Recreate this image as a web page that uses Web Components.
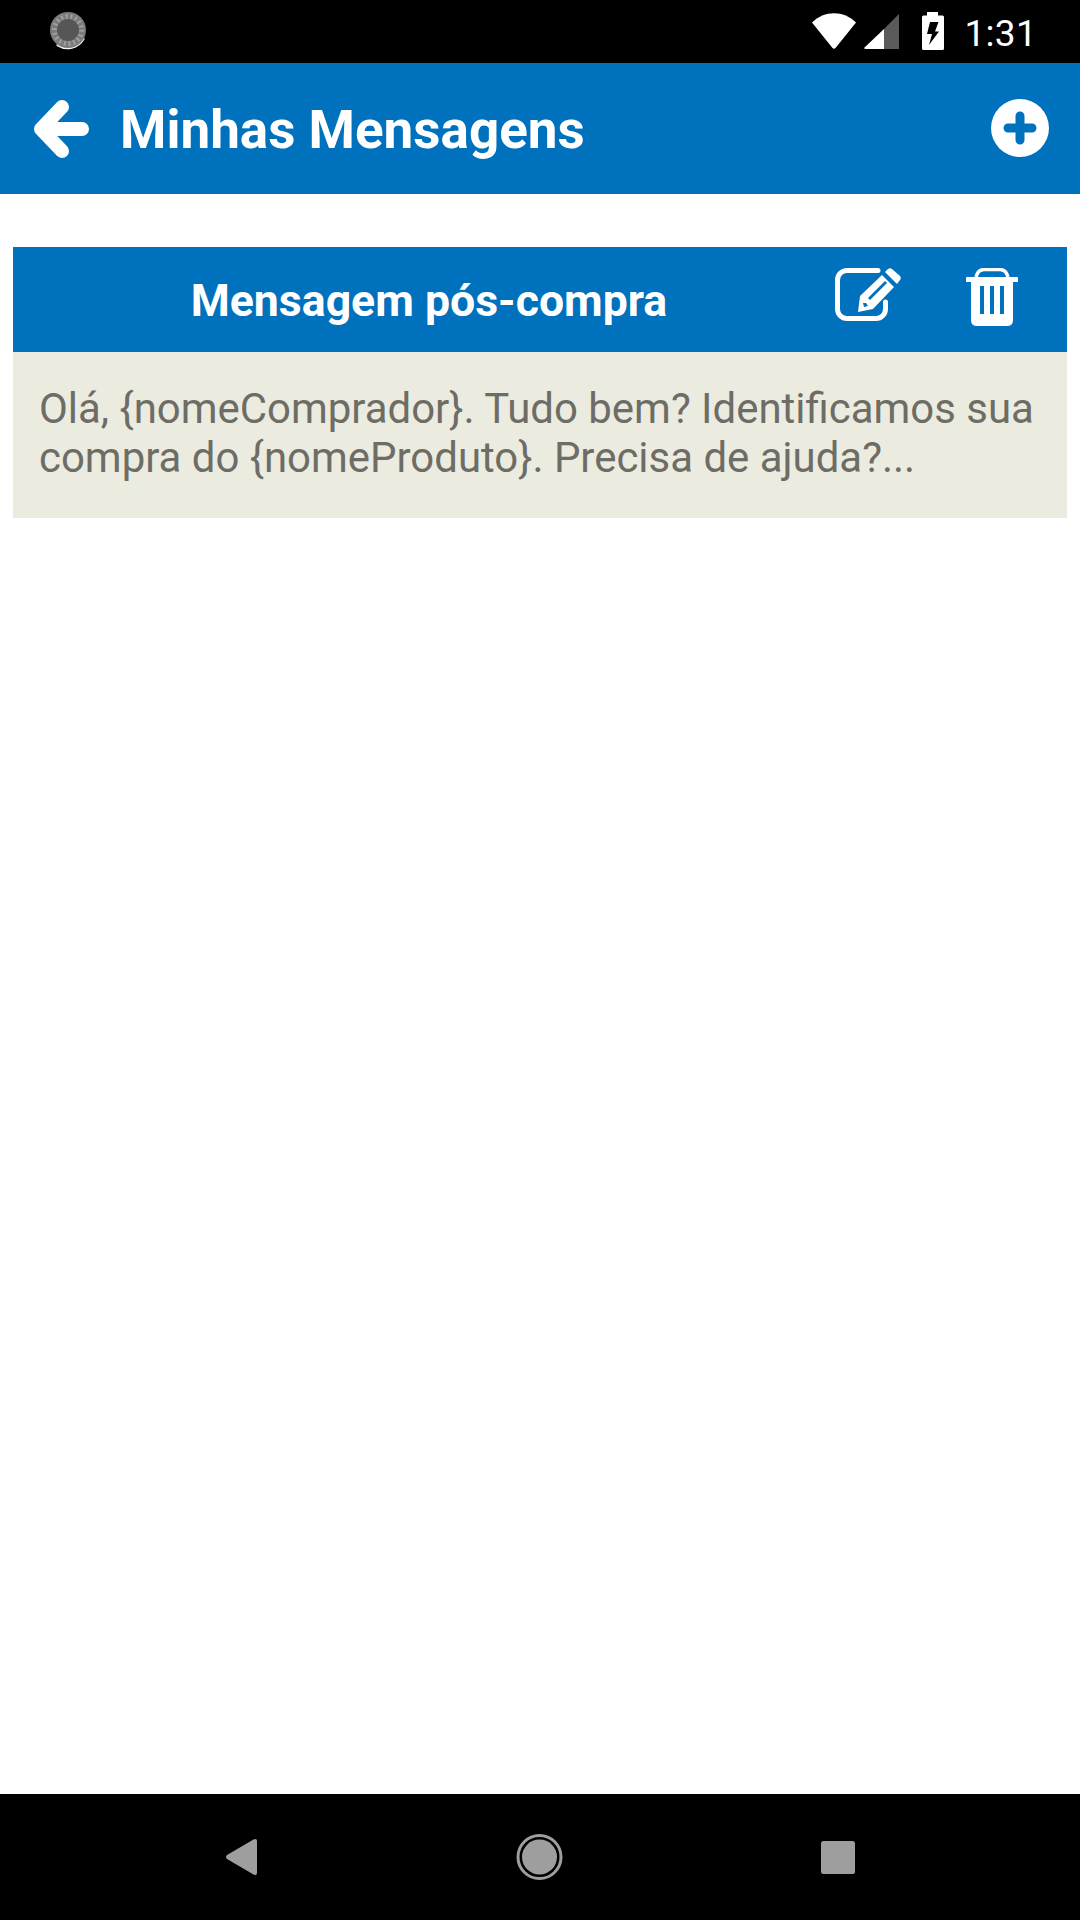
<!DOCTYPE html>
<html>
<head>
<meta charset="utf-8">
<style>
  html, body { margin: 0; padding: 0; background: #fff; }
  body { font-family: Roboto, "Liberation Sans", sans-serif; }
  #app { display: flex; flex-direction: column; width: 1080px; height: 1920px; }
  #content { flex: 1; padding: 53px 13px 0; }
</style>
</head>
<body>
<div id="app">
  <x-status-bar time="1:31"></x-status-bar>
  <x-app-bar>Minhas Mensagens</x-app-bar>
  <div id="content">
    <x-message-card title="Mensagem pós-compra">Olá, {nomeComprador}. Tudo bem? Identificamos sua compra do {nomeProduto}. Precisa de ajuda?...</x-message-card>
  </div>
  <x-nav-bar></x-nav-bar>
</div>
<script>
  class StatusBar extends HTMLElement {
    connectedCallback() {
      if (this.shadowRoot) return;
      this.attachShadow({mode: 'open'}).innerHTML = `
        <style>
          :host { display: flex; align-items: center; height: 63px; background: #000; color: #fff; padding: 0 43px 0 49px; box-sizing: border-box; }
          svg { display: block; flex: none; }
          #spin { margin-top: -1px; }
          #spacer { flex: 1; }
          #wifi { margin-top: -1px; }
          #signal { margin-left: 8px; margin-top: 1px; }
          #battery { margin-left: 23px; margin-top: -1px; }
          #time { margin-left: 20px; margin-top: 4px; font-size: 37px; line-height: 59px; letter-spacing: .3px; }
        </style>
        <svg id="spin" width="40" height="38" viewBox="0 0 40 38">
          <path d="M34 27A18 18 0 0 1 9 33" fill="none" stroke="#f2f2f2" stroke-width="3" stroke-linecap="round"/>
          <circle cx="19" cy="18" r="18" fill="#7c7c7c"/>
          <circle cx="19" cy="18" r="13.500" fill="none" stroke="#a4a4a4" stroke-width="5" stroke-dasharray="1.600 3.100"/>
          <circle cx="19" cy="18" r="11" fill="#565656"/>
        </svg>
        <div id="spacer"></div>
        <svg id="wifi" width="44" height="36" viewBox="0 0 44 36">
          <path d="M0 9.500C12-3 32-3 44 9.500L23.500 35Q22 36.500 20.500 35Z" fill="#fff"/>
        </svg>
        <svg id="signal" width="35" height="36" viewBox="0 0 35 36">
          <path d="M20 15L35 0V35H20Z" fill="#5a5a5a"/>
          <path d="M0 34L20 15V35H1Z" fill="#fff"/>
        </svg>
        <svg id="battery" width="22" height="38" viewBox="0 0 22 38">
          <path d="M5 0H16V3.500H20.500Q22 3.500 22 5V36.500Q22 38 20.500 38H1.500Q0 38 0 36.500V5Q0 3.500 1.500 3.500H5Z" fill="#fff"/>
          <path d="M8 10H16.500L13 19.500H17L7 33L10 22H5Z" fill="#000"/>
        </svg>
        <span id="time">${this.getAttribute('time')}</span>`;
    }
  }
  customElements.define('x-status-bar', StatusBar);

  class AppBar extends HTMLElement {
    connectedCallback() {
      if (this.shadowRoot) return;
      this.attachShadow({mode: 'open'}).innerHTML = `
        <style>
          :host { display: flex; align-items: center; height: 131px; background: #0071bc; color: #fff; padding: 0 31px 0 34px; box-sizing: border-box; }
          svg { display: block; flex: none; }
          #title { flex: 1; margin-left: 31px; font-size: 53px; font-weight: 700; line-height: 60px; padding-top: 3px; }
          #add { margin-top: -2px; }
        </style>
        <svg width="55" height="58" viewBox="0 0 55 58">
          <path d="M28 7L7 29L28 51M7 29H48" fill="none" stroke="#fff" stroke-width="14" stroke-linecap="round" stroke-linejoin="round"/>
        </svg>
        <span id="title"><slot></slot></span>
        <svg id="add" width="58" height="58" viewBox="0 0 58 58">
          <circle cx="29" cy="29" r="29" fill="#fff"/>
          <path d="M29 17V41M17 29H41" fill="none" stroke="#0071bc" stroke-width="9" stroke-linecap="round"/>
        </svg>`;
    }
  }
  customElements.define('x-app-bar', AppBar);

  class MessageCard extends HTMLElement {
    connectedCallback() {
      if (this.shadowRoot) return;
      this.attachShadow({mode: 'open'}).innerHTML = `
        <style>
          :host { display: block; width: 1054px; }
          #head { display: flex; align-items: center; height: 105px; background: #0071bc; color: #fff; }
          #title { flex: 1; text-align: center; font-size: 44.600px; font-weight: 700; line-height: 52px; padding-top: 3px; }
          #actions { display: flex; align-items: flex-start; width: 222px; flex: none; margin-top: -6px; }
          svg { display: block; flex: none; }
          #edit { margin-left: -10px; }
          #trash { margin-left: 65px; }
          #body { background: #ebebe0; color: #6d6d66; font-size: 41.950px; line-height: 49px; padding: 32px 26px 36px; height: 98px; }
        </style>
        <div id="head">
          <span id="title">${this.getAttribute('title')}</span>
          <div id="actions">
            <svg id="edit" width="66" height="54" viewBox="0 0 66 54">
              <path d="M43 2.500H12A9.500 9.500 0 0 0 2.500 12V41A9.500 9.500 0 0 0 12 50.500H41A9.500 9.500 0 0 0 50.500 41V34" fill="none" stroke="#fff" stroke-width="5" stroke-linecap="round"/>
              <path d="M25 28L47 7L59 19L38 41L23 44ZM33 30L50 13L52 15L35 32ZM28 35L29 39L33 38L31 35Z" fill="#fff" fill-rule="evenodd"/>
              <path d="M50 4L53 1Q55-.500 57 1L65 8Q66.500 10 65 12L62 16Z" fill="#fff"/>
            </svg>
            <svg id="trash" width="52" height="58" viewBox="0 0 52 58">
              <path d="M10 9Q12 1.500 18 1.500H34Q40 1.500 42 9" fill="none" stroke="#fff" stroke-width="3.500"/>
              <path d="M1 9H51Q52 9 52 10V14H0V10Q0 9 1 9Z" fill="#fff"/>
              <path d="M5 14H47V52Q47 58 41 58H11Q5 58 5 52Z" fill="#fff"/>
              <path d="M14 18H18V46H14ZM24 18H28V46H24ZM34 18H38V46H34Z" fill="#0071bc"/>
            </svg>
          </div>
        </div>
        <div id="body"><slot></slot></div>`;
    }
  }
  customElements.define('x-message-card', MessageCard);

  class NavBar extends HTMLElement {
    connectedCallback() {
      if (this.shadowRoot) return;
      this.attachShadow({mode: 'open'}).innerHTML = `
        <style>
          :host { display: flex; align-items: center; height: 126px; background: #000; padding: 0 225px 0 226px; box-sizing: border-box; justify-content: space-between; }
          svg { display: block; flex: none; }
        </style>
        <svg width="31" height="36" viewBox="0 0 31 36">
          <path d="M1 16L27.500.500Q31-1 31 2V34Q31 37 27.500 35.500L1 20Q-1 18 1 16Z" fill="#9e9e9e"/>
        </svg>
        <svg width="47" height="46" viewBox="0 0 47 46">
          <circle cx="23.500" cy="23" r="21.500" fill="none" stroke="#9e9e9e" stroke-width="3"/>
          <circle cx="23.500" cy="23" r="17.500" fill="#9e9e9e"/>
        </svg>
        <svg width="34" height="33" viewBox="0 0 34 33">
          <rect width="34" height="33" rx="2.500" fill="#9e9e9e"/>
        </svg>`;
    }
  }
  customElements.define('x-nav-bar', NavBar);
</script>
</body>
</html>
